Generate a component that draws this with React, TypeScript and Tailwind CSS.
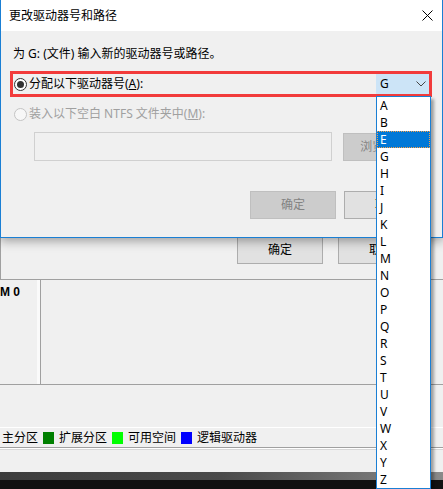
import React from "react";

const letters = ["A", "B", "E", "G", "H", "I", "J", "K", "L", "M", "N", "O", "P", "Q", "R", "S", "T", "U", "V", "W", "X", "Y", "Z"];

function Btn({ children, disabled, w = "w-[86px]" }: { children: React.ReactNode; disabled?: boolean; w?: string }) {
  return (
    <div
      className={
        "flex h-[28px] items-center justify-center border " +
        w +
        " " +
        (disabled ? "border-[#bfbfbf] bg-[#cccccc] text-[#838383]" : "border-[#adadad] bg-[#e1e1e1] text-black")
      }
    >
      {children}
    </div>
  );
}

function Legend({ label, color }: { label: string; color?: string }) {
  return (
    <div className="flex items-center gap-[5px]">
      <span>{label}</span>
      {color && <span className={"h-[12px] w-[11px] " + color} />}
    </div>
  );
}

export default function App() {
  return (
    <div
      className="relative h-[489px] w-[443px] overflow-hidden bg-[#f0f0f0] text-[12px] leading-[16px] text-black"
      style={{ fontFamily: '"Noto Sans", "Noto Sans CJK SC", sans-serif' }}
    >
      {/* 后面的磁盘管理窗口 */}
      <div className="flex h-[280px] items-end justify-end gap-[15px] border-b border-l border-[#a0a0a0] pb-[15px] pr-[19px]">
        <Btn>确定</Btn>
        <Btn>取消</Btn>
      </div>
      <div className="flex h-[105px] border-b border-[#a0a0a0]">
        <div
          className="w-[41px] border-r border-[#a0a0a0] pt-[4px] font-bold shadow-[inset_-3px_0_0_#fafafa]"
          style={{ fontFamily: '"Liberation Sans", sans-serif' }}
        >
          M 0
        </div>
        <div className="flex-1" />
      </div>
      <div className="h-[42px]" />
      <div className="flex h-[20px] items-center gap-[5px] border-t border-white pl-[2px]">
        <Legend label="主分区" color="bg-[#008000]" />
        <Legend label="扩展分区" color="bg-[#00ff00]" />
        <Legend label="可用空间" color="bg-[#0000ff]" />
        <Legend label="逻辑驱动器" />
      </div>
      <div className="h-[3px] border-t border-b border-t-[#a0a0a0] border-b-[#d8d8d8] bg-white" />
      <div className="h-[22px]" />
      <div className="h-[8px] bg-gradient-to-r from-[#3c3c3c] via-[#4a4a4a] to-[#8a8a8a]" />
      <div className="h-[9px] bg-[#111111]" />

      {/* 更改驱动器号和路径 对话框 */}
      <div className="absolute left-0 top-0 flex h-[238px] w-[443px] flex-col border-x border-b border-[#1a7fd4] bg-[#f0f0f0] shadow-[0_3px_10px_rgba(0,0,0,0.35)]">
        <div className="flex h-[31px] items-center justify-between bg-white pl-[8px] pr-[9px]">
          <span>更改驱动器号和路径</span>
          <svg width="11" height="11" viewBox="0 0 11 11">
            <path d="M0.5 0.5 L10.5 10.5 M10.5 0.5 L0.5 10.5" stroke="#000" strokeWidth="1" />
          </svg>
        </div>
        <div className="flex flex-col">
          <div className="pl-[12px] pt-[15px]">为 G: (文件) 输入新的驱动器号或路径。</div>
          <div className="ml-[9px] mt-[9px] flex h-[26px] w-[422px] items-center border-[3px] border-[#f23b3b] pl-[1px]">
            <span className="flex h-[13px] w-[13px] items-center justify-center rounded-full border border-[#333333] bg-white">
              <span className="h-[7px] w-[7px] rounded-full bg-[#333333]" />
            </span>
            <span className="ml-[2px]">
              分配以下驱动器号(<span className="underline">A</span>):
            </span>
            <div className="ml-auto flex h-full w-[53px] items-center justify-between bg-[#cce4f7] pl-[4px] pr-[3px]">
              <span>G</span>
              <svg width="10" height="6" viewBox="0 0 10 6">
                <path d="M0.5 0.5 L5 5 L9.5 0.5" stroke="#444" strokeWidth="1" fill="none" />
              </svg>
            </div>
          </div>
          <div className="ml-[13px] mt-[9px] flex items-center text-[#a0a0a0]">
            <span className="h-[13px] w-[13px] rounded-full border border-[#c4c4c4] bg-[#f7f7f7]" />
            <span className="ml-[2px]">
              装入以下空白 NTFS 文件夹中(<span className="underline">M</span>):
            </span>
          </div>
          <div className="ml-[33px] mt-[10px] flex items-center gap-[11px]">
            <div className="h-[29px] w-[298px] border border-[#d0d0d0] bg-[#f0f0f0]" />
            <Btn disabled w="w-[68px]">浏览...</Btn>
          </div>
          <div className="mt-[30px] flex justify-end gap-[8px] pr-[12px]">
            <Btn disabled>确定</Btn>
            <Btn>取消</Btn>
          </div>
        </div>
      </div>

      {/* 驱动器号下拉列表 */}
      <div className="absolute left-[376px] top-[96px] w-[55px] border border-[#1a7fd4] bg-white shadow-[3px_3px_3px_rgba(0,0,0,0.35)]">
        {letters.map((l) => (
          <div
            key={l}
            className={
              "h-[17px] pl-[3px] leading-[17px] " +
              (l === "E" ? "bg-[#0078d7] text-white outline-1 -outline-offset-1 outline-dotted outline-[#f5a04a]" : "")
            }
          >
            {l}
          </div>
        ))}
      </div>
    </div>
  );
}
